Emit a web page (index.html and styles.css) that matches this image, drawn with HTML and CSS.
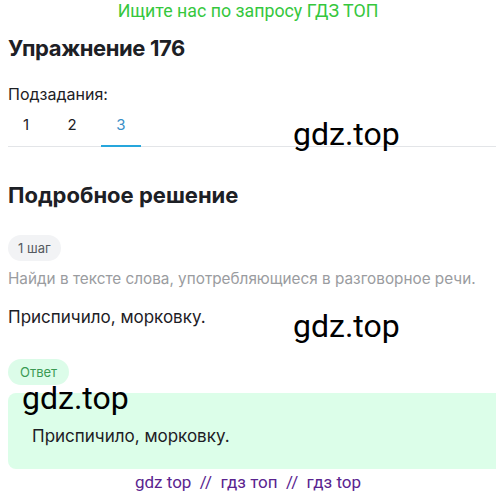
FILE: index.html
```html
<!DOCTYPE html>
<html lang="ru">
<head>
<meta charset="utf-8">
<link rel="stylesheet" href="styles.css">
</head>
<body>
<div class="page">
  <div class="banner">Ищите нас по запросу ГДЗ ТОП</div>
  <main class="content">
    <h1 class="title">Упражнение 176</h1>
    <div class="sub-label">Подзадания:</div>
    <div class="tabs">
      <span class="tab">1</span>
      <span class="tab">2</span>
      <span class="tab active">3</span>
    </div>
    <h2 class="title section">Подробное решение</h2>
    <div class="pill step">1 шаг</div>
    <p class="hint">Найди в тексте слова, употребляющиеся в разговорное речи.</p>
    <p class="text">Приспичило, морковку.</p>
    <div class="pill answer-pill">Ответ</div>
    <div class="answer-box">
      <p class="text">Приспичило, морковку.</p>
    </div>
  </main>
  <div class="footer">gdz top &nbsp;//&nbsp; гдз топ &nbsp;//&nbsp; гдз top</div>
  <div class="wm wm1">gdz.top</div>
  <div class="wm wm2">gdz.top</div>
  <div class="wm wm3">gdz.top</div>
</div>
</body>
</html>
```

FILE: styles.css
```css
html, body {
  margin: 0;
  padding: 0;
  overflow: hidden;
  background: #fff;
}
.page {
  position: relative;
  width: 496px;
  height: 496px;
  overflow: hidden;
  font-family: "Inter", "Liberation Sans", sans-serif;
  color: #1d2025;
}
.banner {
  font-family: "Roboto", "Liberation Sans", sans-serif;
  color: #35c73d;
  font-size: 17.8px;
  text-align: center;
  height: 24px;
  line-height: 22px;
}
.content {
  padding-left: 8px;
}
.title {
  margin: 0;
  font-size: 22px;
  font-weight: 700;
  letter-spacing: -0.4px;
  line-height: 28px;
  padding-top: 10px;
}
.sub-label {
  margin-top: 22px;
  font-size: 16px;
  line-height: 20px;
}
.tabs {
  display: flex;
  gap: 10px;
  margin-top: 10px;
  border-bottom: 1px solid #e3e5e8;
}
.tab {
  width: 36px;
  text-align: center;
  font-size: 15px;
  height: 31px;
  line-height: 22px;
  color: #1d2025;
}
.tab.active {
  color: #3a8fc7;
  width: 40px;
  margin-left: 1px;
  border-bottom: 2px solid #26a6dc;
  margin-bottom: -1px;
}
.section {
  padding-top: 34px;
  letter-spacing: 0;
}
.pill {
  width: fit-content;
  height: 26px;
  line-height: 26px;
  border-radius: 13px;
  font-size: 13px;
}
.step {
  margin-top: 26px;
  background: #f2f3f5;
  color: #555a60;
  padding: 0 10px;
}
.hint {
  margin: 6px 0 0;
  color: #9a9ca0;
  font-size: 15.3px;
  line-height: 24px;
}
.text {
  margin: 0;
  font-size: 17px;
  line-height: 22px;
}
.content > .text {
  margin-top: 15px;
}
.answer-pill {
  margin-top: 31px;
  background: #dcfce9;
  color: #3a9a54;
  padding: 0 12px;
}
.answer-box {
  margin-top: 8px;
  margin-right: -20px;
  background: #dcfee9;
  border-radius: 8px;
  padding: 32px 24px 22px;
}
.footer {
  font-family: "Roboto", "Liberation Sans", sans-serif;
  color: #5a2490;
  font-size: 17px;
  text-align: center;
  margin-top: 2px;
  line-height: 22px;
}
.wm {
  position: absolute;
  font-family: "Roboto", "Liberation Sans", sans-serif;
  font-size: 32px;
  color: #000;
  line-height: 1;
}
.wm1 { left: 293px; top: 118px; }
.wm2 { left: 293px; top: 310px; }
.wm3 { left: 22px; top: 382px; }
```
